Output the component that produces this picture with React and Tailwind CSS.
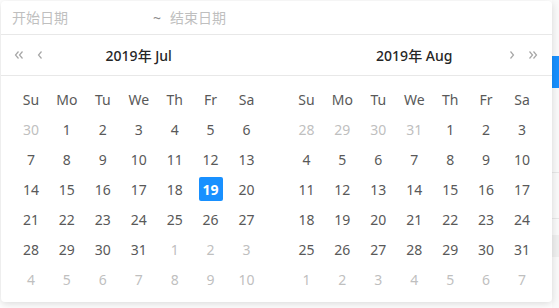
import React from "react";

const weekDays = ["Su", "Mo", "Tu", "We", "Th", "Fr", "Sa"];

// each cell: [day, inMonth]
function buildMonth(prevTail, daysInMonth, nextCount) {
  const cells = [];
  prevTail.forEach((d) => cells.push([d, false]));
  for (let d = 1; d <= daysInMonth; d++) cells.push([d, true]);
  for (let d = 1; d <= nextCount; d++) cells.push([d, false]);
  return cells;
}

const months = [
  { title: "2019年 Jul", cells: buildMonth([30], 31, 10), side: "left" },
  { title: "2019年 Aug", cells: buildMonth([28, 29, 30, 31], 31, 7), side: "right" },
];

function Chevron({ dir = "left", double = false }) {
  const single = dir === "left" ? "M4.5 1.5 L1.5 5 L4.5 8.5" : "M1.5 1.5 L4.5 5 L1.5 8.5";
  const second = dir === "left" ? "M8.5 1.5 L5.5 5 L8.5 8.5" : "M5.5 1.5 L8.5 5 L5.5 8.5";
  return (
    <svg width={double ? 10 : 6} height="10" viewBox={double ? "0 0 10 10" : "0 0 6 10"} fill="none">
      <path d={single} stroke="#a6a6a6" strokeWidth="1.2" />
      {double && <path d={second} stroke="#a6a6a6" strokeWidth="1.2" />}
    </svg>
  );
}

function MonthHeader({ title, side }) {
  return (
    <div className="w-[276px] h-[40px] flex items-center relative">
      {side === "left" && (
        <div className="absolute left-[13px] flex items-center gap-[13px]">
          <Chevron dir="left" double />
          <Chevron dir="left" />
        </div>
      )}
      <div className="flex-1 text-center text-[14px] font-medium text-[#262626]">{title}</div>
      {side === "right" && (
        <div className="absolute right-[14px] flex items-center gap-[13px]">
          <Chevron dir="right" />
          <Chevron dir="right" double />
        </div>
      )}
    </div>
  );
}

function MonthBody({ cells, selected }) {
  return (
    <div className="w-[276px] px-[12px] pt-[8px]">
      <div className="grid grid-cols-7">
        {weekDays.map((w) => (
          <div key={w} className="h-[30px] flex items-center justify-center text-[14px] text-[#595959]">
            {w}
          </div>
        ))}
        {cells.map(([day, inMonth], i) => {
          const isSel = inMonth && day === selected;
          return (
            <div key={i} className="h-[30px] flex items-center justify-center">
              <span
                className={`h-[24px] min-w-[24px] px-[1px] flex items-center justify-center rounded-[2px] text-[14px] ${
                  isSel
                    ? "bg-[#1890ff] text-white font-bold"
                    : inMonth
                    ? "text-[#595959]"
                    : "text-[#bfbfbf]"
                }`}
              >
                {day}
              </span>
            </div>
          );
        })}
      </div>
    </div>
  );
}

export default function App() {
  return (
    <main
      className="relative w-[559px] h-[308px] bg-white overflow-hidden"
      style={{ fontFamily: '"Noto Sans", "Noto Sans CJK SC", sans-serif' }}
    >
      {/* page behind the dropdown */}
      <div className="absolute right-0 top-0 w-[7px] h-full bg-[#fafafa]">
        <div className="mt-[56px] h-[32px] bg-[#1890ff]" />
        <div className="mt-[84px] h-px bg-[#e8e8e8]" />
        <div className="mt-[45px] h-px bg-[#e8e8e8]" />
        <div className="mt-[16px] h-[22px] bg-[#f0f0f0]" />
      </div>

      {/* range picker dropdown */}
      <div className="absolute left-[1px] top-[1px] w-[551px] bg-white rounded-[4px] shadow-[0_2px_8px_rgba(0,0,0,0.15)] pb-[8px]">
        <div className="h-[34px] flex items-center border-b border-[#e8e8e8] text-[14px] text-[#bfbfbf]">
          <span className="pl-[11px] w-[152px]">开始日期</span>
          <span className="w-[17px] text-[#8c8c8c]">~</span>
          <span>结束日期</span>
        </div>
        <div className="flex border-b border-[#e8e8e8]">
          {months.map((m) => (
            <MonthHeader key={m.title} title={m.title} side={m.side} />
          ))}
        </div>
        <div className="flex">
          <MonthBody cells={months[0].cells} selected={19} />
          <MonthBody cells={months[1].cells} selected={null} />
        </div>
      </div>
    </main>
  );
}
